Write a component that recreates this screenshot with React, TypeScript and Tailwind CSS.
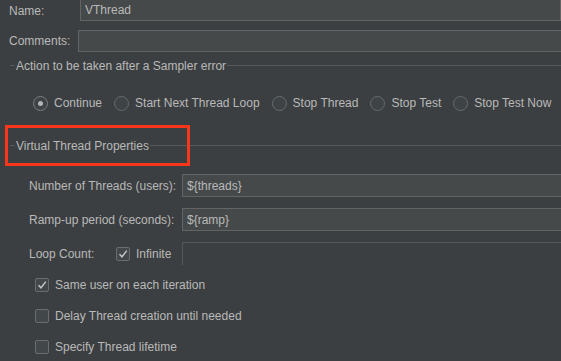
const font = "font-['Liberation_Sans',Arial,sans-serif]";

function Legend({ title, className }: { title: string; className?: string }) {
  return (
    <div className={`flex h-[15px] items-center ${className ?? ""}`}>
      <span className="h-px w-[5px] bg-[#56595b]" />
      <span className="px-[1px] whitespace-nowrap">{title}</span>
      <span className="h-px flex-1 bg-[#56595b]" />
    </div>
  );
}

function Radio({ label, checked }: { label: string; checked?: boolean }) {
  return (
    <div className="flex items-center">
      <span
        className={`flex h-[15px] w-[15px] items-center justify-center rounded-full border bg-[#3e4345] ${
          checked ? "border-[#7a7d7f]" : "border-[#686b6d]"
        }`}
      >
        {checked && <span className="h-[5px] w-[5px] rounded-full bg-[#b4b4b4]" />}
      </span>
      <span className="ml-[6px] whitespace-nowrap">{label}</span>
    </div>
  );
}

function Check({ checked }: { checked?: boolean }) {
  return (
    <span className="flex h-[14px] w-[14px] items-center justify-center rounded-[2px] border border-[#6a6d6f] bg-[#42474a]">
      {checked && (
        <svg width="12" height="12" viewBox="0 0 12 12">
          <path d="M2.5 6.2 L5 8.8 L9.8 2.6" fill="none" stroke="#c4c4c4" strokeWidth="1.5" />
        </svg>
      )}
    </span>
  );
}

function CheckRow({ label, checked }: { label: string; checked?: boolean }) {
  return (
    <div className="flex h-[16px] items-center">
      <Check checked={checked} />
      <span className="ml-[6px]">{label}</span>
    </div>
  );
}

export default function App() {
  return (
    <div
      className={`relative h-[361px] w-[561px] overflow-hidden bg-[#3c3f41] text-[12px] leading-none text-[#b9b9b9] ${font}`}
    >
      {/* name */}
      <div className="flex h-[21px] items-center">
        <span className="w-[80px] pl-[9px]">Name:</span>
        <div className="flex h-full flex-1 items-center border-x border-b border-[#646464] bg-[#45494a] pl-[4px]">
          VThread
        </div>
      </div>

      {/* comments */}
      <div className="mt-[9px] flex h-[22px] items-center">
        <span className="w-[78px] pl-[9px]">Comments:</span>
        <div className="h-full flex-1 border border-r-0 border-[#646464] bg-[#45494a]" />
      </div>

      <Legend title="Action to be taken after a Sampler error" className="mt-[6px] pl-[10px]" />

      <div className="mt-[22px] flex h-[16px] items-center gap-[12px] pl-[33px]">
        <Radio label="Continue" checked />
        <Radio label="Start Next Thread Loop" />
        <Radio label="Stop Thread" />
        <Radio label="Stop Test" />
        <Radio label="Stop Test Now" />
      </div>

      <Legend title="Virtual Thread Properties" className="mt-[27px] pl-[10px]" />

      <div className="mt-[21px] flex h-[23px] items-center">
        <span className="w-[182px] pl-[29px]">Number of Threads (users):</span>
        <div className="flex h-full flex-1 items-center border border-r-0 border-[#646464] bg-[#45494a] pl-[4px]">
          {"${threads}"}
        </div>
      </div>

      <div className="mt-[11px] flex h-[23px] items-center">
        <span className="w-[182px] pl-[29px]">Ramp-up period (seconds):</span>
        <div className="flex h-full flex-1 items-center border border-r-0 border-[#646464] bg-[#45494a] pl-[4px]">
          {"${ramp}"}
        </div>
      </div>

      <div className="mt-[11px] flex h-[23px] items-center">
        <span className="w-[116px] pl-[29px]">Loop Count:</span>
        <Check checked />
        <span className="ml-[6px] w-[46px]">Infinite</span>
        <div className="h-full flex-1 border-l border-t border-[#555859]" />
      </div>

      <div className="mt-[12px] flex flex-col gap-[15px] pl-[35px]">
        <CheckRow label="Same user on each iteration" checked />
        <CheckRow label="Delay Thread creation until needed" />
        <CheckRow label="Specify Thread lifetime" />
      </div>

      {/* annotation */}
      <div className="absolute left-[5px] top-[125px] h-[41px] w-[185px] border-[3px] border-[#f8361a]" />
    </div>
  );
}
